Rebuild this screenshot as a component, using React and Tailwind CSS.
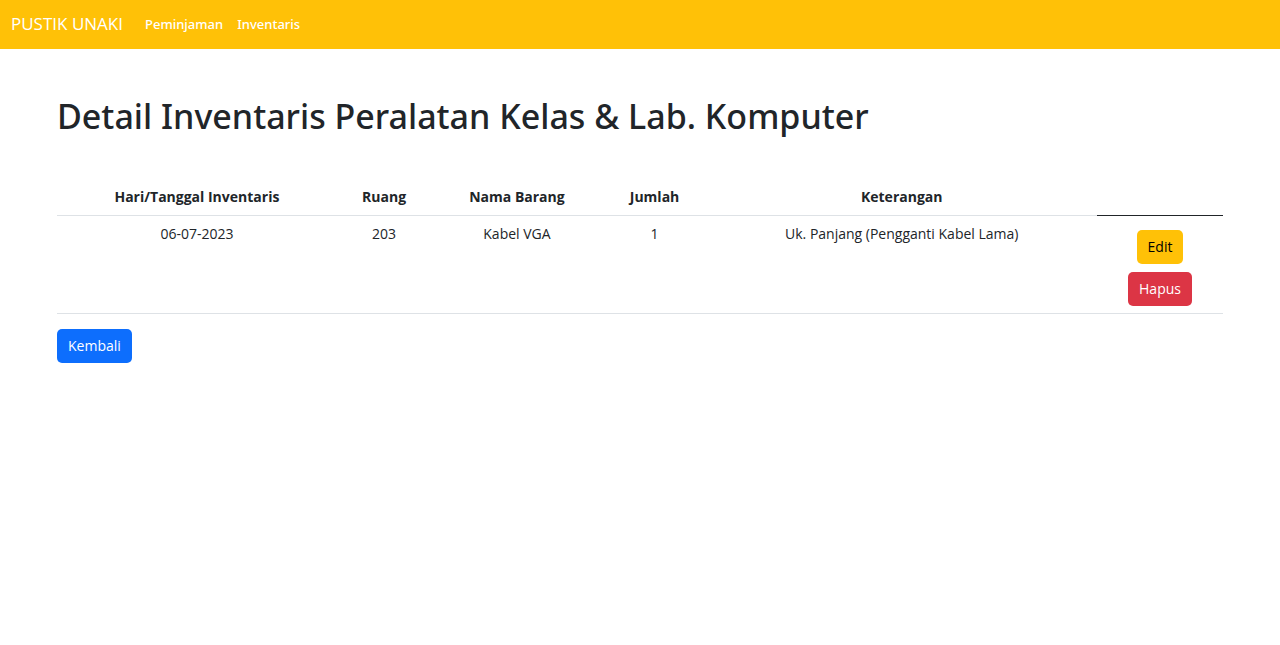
const columns = [
  { label: "Hari/Tanggal Inventaris", value: "06-07-2023", width: "w-[24%]" },
  { label: "Ruang", value: "203", width: "w-[8.1%]" },
  { label: "Nama Barang", value: "Kabel VGA", width: "w-[14.7%]" },
  { label: "Jumlah", value: "1", width: "w-[8.9%]" },
  { label: "Keterangan", value: "Uk. Panjang (Pengganti Kabel Lama)", width: "w-[33.5%]" },
];

const button = "cursor-pointer rounded-[5px] px-[11px] py-[7px] text-sm leading-5";

export default function App() {
  return (
    <div className="bg-white font-['Open_Sans','Noto_Sans',sans-serif] text-sm text-[#212529]">
      <nav className="flex h-[49px] items-center bg-[#ffc107] px-[11px] pb-px text-white">
        <a href="#" className="mr-[22px] text-[17px] leading-6">PUSTIK UNAKI</a>
        <div className="flex gap-[14px] font-['Noto_Sans','Open_Sans',sans-serif] text-[13px] leading-5 font-medium">
          <a href="#peminjaman">Peminjaman</a>
          <a href="#inventaris">Inventaris</a>
        </div>
      </nav>
      <main className="px-[57px] pt-[45px]">
        <h1 className="font-['Noto_Sans','Open_Sans',sans-serif] text-[34px] leading-[45px] font-medium">
          Detail Inventaris Peralatan Kelas &amp; Lab. Komputer
        </h1>
        <table className="mt-10 w-full table-fixed border-collapse text-center leading-[21px]">
          <thead>
            <tr>
              {columns.map((c) => (
                <th key={c.label} scope="col" className={`${c.width} border-b border-[#dee2e6] px-2 pt-[7px] pb-2 font-bold`}>
                  {c.label}
                </th>
              ))}
              <td className="border-b border-[#212529]" />
            </tr>
          </thead>
          <tbody>
            <tr className="border-b border-[#dee2e6] align-top">
              {columns.map((c) => (
                <td key={c.label} className="px-2 py-[7px]">{c.value}</td>
              ))}
              <td className="px-2 pt-[14px] pb-[7px]">
                <div className="flex flex-col items-center gap-2">
                  <button type="button" className={`${button} bg-[#ffc107] text-black`}>Edit</button>
                  <button type="button" className={`${button} bg-[#dc3545] text-white`}>Hapus</button>
                </div>
              </td>
            </tr>
          </tbody>
        </table>
        <button type="button" className={`${button} mt-[15px] bg-[#0d6efd] text-white`}>Kembali</button>
      </main>
    </div>
  );
}
